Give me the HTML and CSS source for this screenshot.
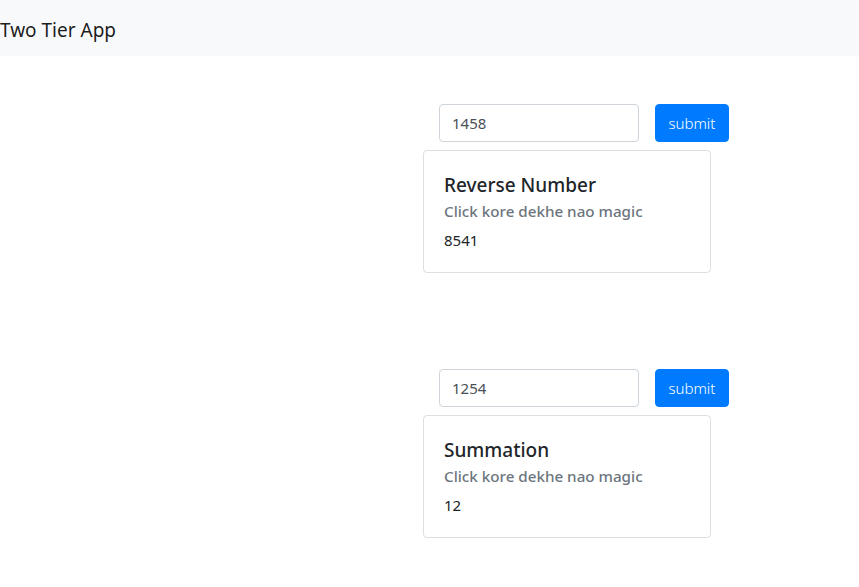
FILE: index.html
```html
<!DOCTYPE html>
<html lang="en">
<head>
<meta charset="utf-8">
<title>Two Tier App</title>
<link rel="stylesheet" href="styles.css">
</head>
<body>
<nav class="navbar">
  <span class="brand">Two Tier App</span>
</nav>
<main class="main">
  <section class="block">
    <form class="form-row">
      <input class="form-control" type="text" value="1458">
      <button class="btn" type="button">submit</button>
    </form>
    <div class="card">
      <h5 class="card-title">Reverse Number</h5>
      <h6 class="card-subtitle">Click kore dekhe nao magic</h6>
      <p class="card-text">8541</p>
    </div>
  </section>
  <section class="block">
    <form class="form-row">
      <input class="form-control" type="text" value="1254">
      <button class="btn" type="button">submit</button>
    </form>
    <div class="card">
      <h5 class="card-title">Summation</h5>
      <h6 class="card-subtitle">Click kore dekhe nao magic</h6>
      <p class="card-text">12</p>
    </div>
  </section>
</main>
</body>
</html>
```
FILE: styles.css
```css
* { box-sizing: border-box; }
html, body { margin: 0; padding: 0; }
body {
  font-family: "Noto Sans", "Open Sans", sans-serif;
  font-size: 16px;
  line-height: 1.5;
  color: #212529;
  background: #fff;
}
.navbar {
  background: #f8f9fa;
  padding: 8px 0;
  height: 56px;
  display: flex;
  align-items: center;
}
.brand {
  font-size: 19px;
  line-height: 30px;
  padding: 7px 0 3px;
  color: rgba(0,0,0,.9);
}
.main {
  padding: 48px 0 0 423px;
  display: flex;
  flex-direction: column;
  gap: 96px;
}
.block {
  display: flex;
  flex-direction: column;
  gap: 8px;
  width: 306px;
}
.form-row {
  display: flex;
  gap: 16px;
  padding-left: 16px;
  margin: 0;
}
.form-control {
  width: 200px;
  height: 38px;
  padding: 6px 12px;
  font-family: inherit;
  font-size: 15px;
  color: #495057;
  background: #fff;
  border: 1px solid #ced4da;
  border-radius: 4px;
  outline: none;
}
.btn {
  height: 38px;
  padding: 6px 12.5px;
  font-family: inherit;
  font-size: 15px;
  font-weight: 300;
  color: #fff;
  background: #007bff;
  border: 1px solid #007bff;
  border-radius: 4px;
}
.card {
  width: 288px;
  border: 1px solid rgba(0,0,0,.125);
  border-radius: 4px;
  padding: 20px;
}
.card-title {
  margin: 0 0 10px;
  padding-top: 2px;
  font-size: 19px;
  font-weight: 500;
  line-height: 24px;
}
.card-subtitle {
  margin: -5px 0 7px;
  font-size: 15.2px;
  font-weight: 500;
  line-height: 19px;
  color: #6c757d;
}
.card-text {
  margin: 0;
  font-size: 15px;
  line-height: 24px;
}
```
